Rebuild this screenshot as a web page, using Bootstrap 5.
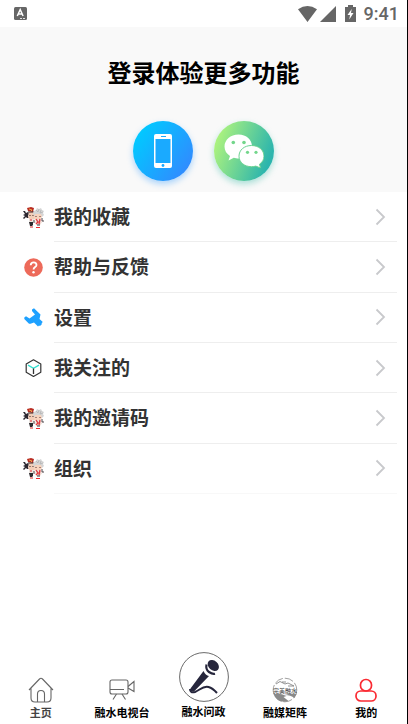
<!DOCTYPE html>
<html lang="zh-CN">
<head>
<meta charset="utf-8">
<meta name="viewport" content="width=device-width, initial-scale=1">
<title>我的</title>
<link rel="stylesheet" href="https://cdn.jsdelivr.net/npm/bootstrap@5.3.0/dist/css/bootstrap.min.css">
<style>
body{font-family:"Noto Sans CJK SC",sans-serif;color:#000;background:#fff}
svg{display:block;flex:none}
.app-screen{border-right:1px solid #000}
.status-bar{height:27px;padding:0 8px 0 14px;color:#666}
.status-time{font:500 18px/27px Roboto,sans-serif}
.login-panel{background:#f9f9f9;padding:27px 0 11px}
.login-title{font-size:24px;line-height:36px;font-weight:700}
.login-row{gap:21px;margin-top:31px}
.login-btn{width:60px;height:60px;border:0;padding:0}
.by-phone{background:linear-gradient(125deg,#00caff 12%,#3289ff 90%);box-shadow:0 3px 6px #339cff66}
.by-wechat{background:linear-gradient(110deg,#b1f57c 8%,#2cb5ad 85%);box-shadow:0 3px 6px #35b9a666}
.menu-list{min-height:302px}
.menu-row{padding-left:22px;color:#333;gap:9px}
.menu-icon{width:23px}
.menu-body{border-bottom:1px solid #eee;margin-right:10px;padding-right:11px;font-size:19px;line-height:28px;font-weight:700}
.menu-row:last-child .menu-body{border-color:#f8f8f8}
.menu-label{padding-bottom:1px}
.tab-bar{padding-bottom:4px}
.tab-link{color:#000;font-size:11px;line-height:16px;font-weight:700}
.tab-link.tab-home{color:#444}
.tab-raised{padding-bottom:1px}
.tab-art{margin-bottom:1px}
</style>
<script src="https://cdn.jsdelivr.net/npm/bootstrap@5.3.0/dist/js/bootstrap.bundle.min.js"></script>
</head>
<body>
<svg width="0" height="0" class="position-absolute" aria-hidden="true">
<symbol id="chevron" viewBox="0 0 11 18"><path d="M1.500 1.500 9 9l-7.500 7.500" fill="none" stroke="#c8c9cc" stroke-width="1.800"/></symbol>
<symbol id="mascots" viewBox="0 0 23 23">
<path d="M1 5h2l1 2 2-1 1 2-1 2 1 2-2 0-1-1-2 2-1-1 2-2-2-1 2-1z" fill="#2c2932"/>
<path d="M7 6h6l1 5-2 3H8l-2-3z" fill="#f3cdb7"/>
<path d="M5 2 9 1l3 1-1 4-5-1z" fill="#b92c22"/><path d="m7 3 3 1-1 1" fill="none" stroke="#e9a34c"/>
<path d="M6 6h6M8 9v1m3-1v1" stroke="#3b2425"/>
<path d="M7 13h5l1 3H7z" fill="#ece5e1"/><path d="M7 16h4v3l-1 1H8z" fill="#2b292e"/><path d="M9 13v2M8 21h3" stroke="#dd2b2c"/>
<path d="m12 5 2-1 1-2 2 1 2-1 1 2 2 1-1 2 1 2-2 2-8-1-1-3z" fill="#d5d5d5"/>
<path d="m14 4 2 2 1-3m2 1-1 3 3-1" fill="none" stroke="#aaa" stroke-width=".6"/>
<path d="M13 8h6l1 3-2 3h-4l-2-2z" fill="#f7d3bd"/><path d="M14 10v1m4-1v1" stroke="#573033"/>
<path d="m14 13-1 4 2 2h3l2-3-2-3z" fill="#f0d9d1"/><path d="m14 13 2 3-2 2m4-5-1 5" fill="none" stroke="#e2383f" stroke-width="1.300"/>
<path d="M20 12v3h2M12 14v3" fill="none" stroke="#4a4246"/><path d="M14 21h4v1h-4z" fill="#ee292e"/><path d="M15 19h3" stroke="#35343a"/>
</symbol>
</svg>
<div class="app-screen min-vh-100 d-flex flex-column">
<header class="status-bar d-flex align-items-center justify-content-between">
<svg width="13" height="13" viewBox="0 0 13 13"><rect width="13" height="13" rx="1.500" fill="#666"/><path d="m3.300 9 2.900-6.500L9.100 9M4.500 7h3.500" fill="none" stroke="#fff" stroke-width="1.500"/><path d="M6 11.500h6" stroke="#fff" stroke-width=".8" stroke-dasharray="2 1"/></svg>
<div class="d-flex align-items-center">
<svg width="59" height="18" viewBox="0 0 59 18" fill="#666"><path d="M1 4.300Q10.500-2.300 20 4.300L10.500 17zM23 17 39 1v16zM48 2h3V0h5v2h3v15H48z"/><path d="M54.700 4 50.500 10H53l-.7 4.500L56.500 8H54z" fill="#fff"/></svg>
<span class="status-time ms-2">9:41</span>
</div>
</header>
<main>
<section class="login-panel">
<h1 class="login-title text-center m-0">登录体验更多功能</h1>
<div class="login-row d-flex justify-content-center">
<button type="button" class="login-btn by-phone rounded-circle d-flex align-items-center justify-content-center" aria-label="手机登录"><svg width="18" height="34" viewBox="0 0 18 34"><rect width="18" height="34" rx="2" fill="#fff"/><path d="M1.500 5h15v24h-15z" fill="#1aaaff"/><path d="M7 2.500h5" stroke="#1aaaff"/><circle cx="9" cy="31.500" r="1.400" fill="#1aaaff"/></svg></button>
<button type="button" class="login-btn by-wechat rounded-circle d-flex align-items-center justify-content-center" aria-label="微信登录"><svg width="40" height="34" viewBox="0 0 40 34"><path d="M14.500.5C6.500.5.500 6 .5 12.500c0 4 2 7.200 5.500 9.500l-1.500 4.500 5.300-2.700c1.500.5 3 .7 5 .7C23 24.500 28 19 28 12.500 28 5.500 22.500.5 14.500.5z" fill="#fff"/><path d="M27.500 11.500c-7.200 0-12.500 4.500-12.500 10.700 0 6 5.300 10.500 12.500 10.500 1.600 0 3-.2 4.300-.6l4.700 1.900-1-3.800c2.900-2 4.500-4.700 4.500-8 0-6.200-5.300-10.700-12.500-10.700z" fill="#fff" stroke="#6bd291" stroke-width="1"/><g fill="#73d68b"><circle cx="9.300" cy="8.500" r="1.800"/><circle cx="20" cy="8.500" r="1.800"/><circle cx="23.500" cy="18.300" r="1.600"/><circle cx="32" cy="18.300" r="1.600"/></g></svg></button>
</div>
</section>
<nav class="menu-list d-flex flex-column" aria-label="菜单">
<a href="#favorites" class="menu-row flex-fill d-flex text-decoration-none"><span class="menu-icon d-flex align-items-center justify-content-center"><svg width="23" height="23"><use href="#mascots"/></svg></span><span class="menu-body flex-fill d-flex align-items-center justify-content-between"><span class="menu-label">我的收藏</span><svg width="11" height="18"><use href="#chevron"/></svg></span></a>
<a href="#help" class="menu-row flex-fill d-flex text-decoration-none"><span class="menu-icon d-flex align-items-center justify-content-center"><svg width="19" height="19" viewBox="0 0 19 19"><circle cx="9.500" cy="9.500" r="9.300" fill="#ed6a5a"/><path d="M6.700 7.200c.2-4 5.800-3.700 5.800-.3 0 2.200-3 2-3 4.600" fill="none" stroke="#fff" stroke-width="1.800"/><circle cx="9.500" cy="14.200" r="1.200" fill="#fff"/></svg></span><span class="menu-body flex-fill d-flex align-items-center justify-content-between"><span class="menu-label">帮助与反馈</span><svg width="11" height="18"><use href="#chevron"/></svg></span></a>
<a href="#settings" class="menu-row flex-fill d-flex text-decoration-none"><span class="menu-icon d-flex align-items-center justify-content-center"><svg width="19" height="19" viewBox="0 0 19 19"><path d="M8 1.500 10 .3l6.500 6.200-1 4.500 3.300 3-1.300 1.200.5.800-2 2-1-.5-1 1-4-4-3.500 1.300H5L.3 11 .3 9.500 2 8.300l3.500 2.200L11 6.500 8 3z" fill="#1ea1ff"/></svg></span><span class="menu-body flex-fill d-flex align-items-center justify-content-between"><span class="menu-label">设置</span><svg width="11" height="18"><use href="#chevron"/></svg></span></a>
<a href="#following" class="menu-row flex-fill d-flex text-decoration-none"><span class="menu-icon d-flex align-items-center justify-content-center"><svg width="17" height="18" viewBox="0 0 17 18" fill="none"><path d="M8.500.8 15.800 5v8.200l-7.300 4.200-7.300-4.200V5z" stroke="#333" stroke-width="1.200" stroke-linejoin="round"/><path d="M3 6.200 8.500 9.300 14 6.200" stroke="#32e0d0" stroke-width="1.400"/><path d="M8.500 9.500v5.500" stroke="#333" stroke-width="1.300"/></svg></span><span class="menu-body flex-fill d-flex align-items-center justify-content-between"><span class="menu-label">我关注的</span><svg width="11" height="18"><use href="#chevron"/></svg></span></a>
<a href="#invite" class="menu-row flex-fill d-flex text-decoration-none"><span class="menu-icon d-flex align-items-center justify-content-center"><svg width="23" height="23"><use href="#mascots"/></svg></span><span class="menu-body flex-fill d-flex align-items-center justify-content-between"><span class="menu-label">我的邀请码</span><svg width="11" height="18"><use href="#chevron"/></svg></span></a>
<a href="#groups" class="menu-row flex-fill d-flex text-decoration-none"><span class="menu-icon d-flex align-items-center justify-content-center"><svg width="23" height="23"><use href="#mascots"/></svg></span><span class="menu-body flex-fill d-flex align-items-center justify-content-between"><span class="menu-label">组织</span><svg width="11" height="18"><use href="#chevron"/></svg></span></a>
</nav>
</main>
<nav class="tab-bar row g-0 mt-auto align-items-end text-center" aria-label="主导航">
<a href="#home" class="tab-link tab-home col text-decoration-none"><svg class="tab-art mx-auto" width="26" height="26" viewBox="0 0 26 26" fill="none" stroke="#666" stroke-width="1.100"><path d="M1 13 11.500 2q1.500-1.500 3 0L25 13M3 11.500V21q0 4 4 4h12q4 0 4-4v-9.500M9.500 25v-8q0-3.500 3.500-3.500t3.500 3.500v8"/></svg>主页</a>
<a href="#tv" class="tab-link col text-decoration-none"><svg class="tab-art mx-auto" width="26" height="26" viewBox="0 0 26 26" fill="none" stroke="#666" stroke-width="1.100"><rect x="1" y="3" width="18" height="14" rx="2"/><path d="M1 12.500h14M19 9.500l6-5v10l-6-3.500M7.500 17 4 22.500M13 17l3.500 5.500"/></svg>融水电视台</a>
<a href="#ask" class="tab-link tab-raised col text-decoration-none"><svg class="tab-art mx-auto" width="50" height="50" viewBox="0 0 50 50"><circle cx="25" cy="25" r="24.400" fill="#fff" stroke="#444" stroke-width=".8"/><ellipse cx="34.300" cy="13.500" rx="6.300" ry="4.700" transform="rotate(42 34.300 13.500)" fill="#26263c"/><path d="M27.500 12.500q-1 5 2.500 7.500t6 1.800" fill="none" stroke="#26263c" stroke-width="2.200"/><path d="M24.500 19q2 4.500 5.500 5L15 39.500q-2.500 1-3.500-1-.5-1 0-2z" fill="#26263c"/><path d="M11 37q0 4.500 5 3c5-2 8-6.500 13.500-5q4 1 8.500 6" fill="none" stroke="#26263c" stroke-width="2"/></svg>融水问政</a>
<a href="#media" class="tab-link col text-decoration-none"><svg class="tab-art mx-auto" width="26" height="26" viewBox="0 0 26 26"><circle cx="13" cy="13" r="11.800" fill="none" stroke="#777" stroke-width=".7" stroke-dasharray="9 2"/><path d="m4 7 4-2.500 5 2.500 3-1 6 3M10 5h4m2 4h6" fill="none" stroke="#777" stroke-width=".8"/><path d="M1.500 17q7-1 13 2l-3 1 5 4q-11 3-15-7M13 18q5-2 11.500-1l-2 4q-4-3-9.500-3" fill="#8a8a8a"/><text x="13" y="15.500" text-anchor="middle" font-size="6" font-weight="500" fill="#555">完美融水</text></svg>融媒矩阵</a>
<a href="#me" class="tab-link col text-decoration-none" aria-current="page"><svg class="tab-art mx-auto" width="22" height="25" viewBox="0 0 22 25" fill="none" stroke="#fa2a32" stroke-width="1.700"><rect x="5.500" y="1.500" width="11" height="11.500" rx="5.300"/><rect x="1" y="13" width="20" height="10" rx="4.800"/></svg>我的</a>
</nav>
</div>
</body>
</html>
